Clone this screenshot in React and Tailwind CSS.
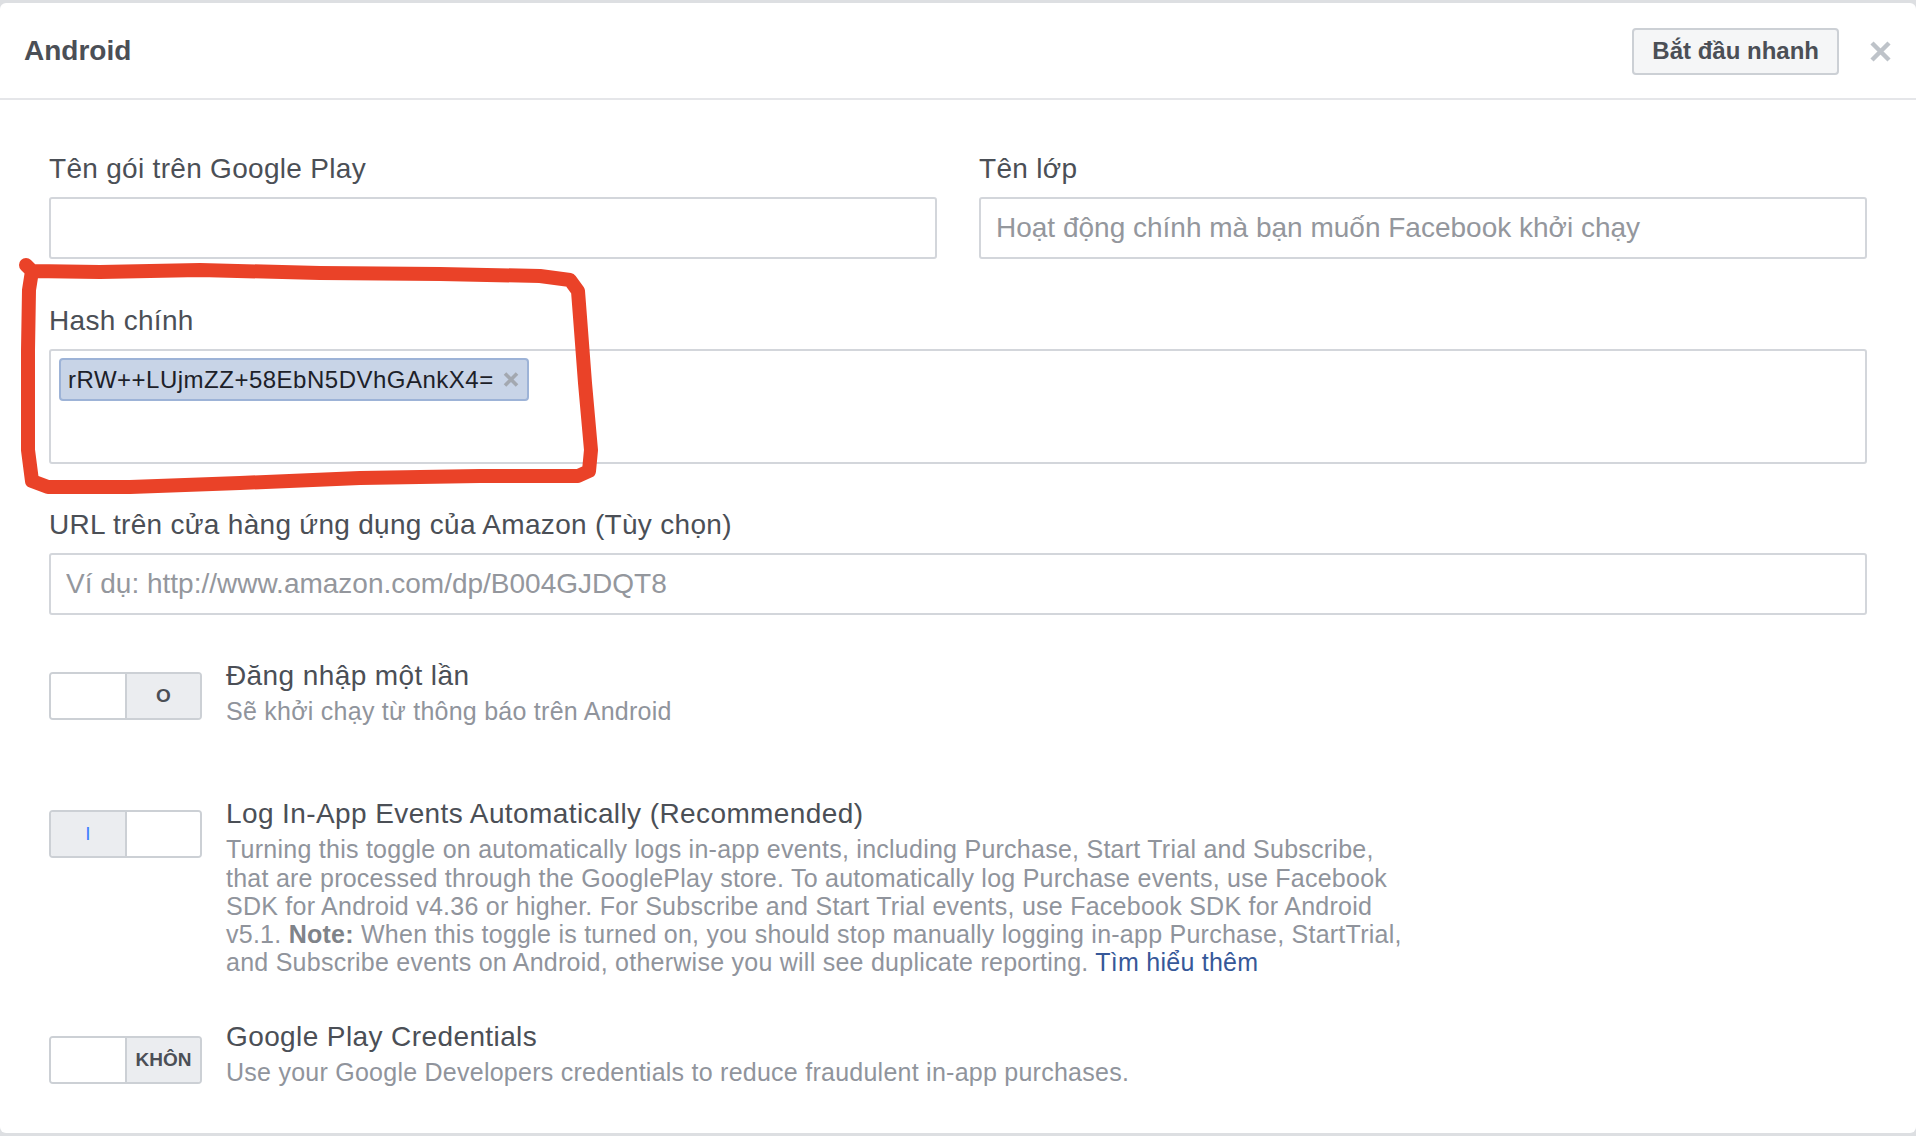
import React from "react";

function Label({ children }) {
  return (
    <div className="text-[28px] leading-[34px] tracking-[0.3px] text-[#4b4f56] mb-[11px] whitespace-nowrap">{children}</div>
  );
}

function TextInput({ placeholder }) {
  return (
    <input
      readOnly
      placeholder={placeholder}
      className="w-full h-[62px] border-2 border-[#d3d6db] rounded-[3px] bg-white px-[15px] text-[28px] text-[#1d2129] placeholder:text-[#94979d] outline-none"
    />
  );
}

function Toggle({ on, offLabel, offset }) {
  const mt = offset === "low" ? "mt-[16px]" : "mt-[13px]";
  if (on) {
    return (
      <div className={mt + " w-[153px] h-[48px] shrink-0 border-2 border-[#ccd0d5] rounded-[4px] flex overflow-hidden"}>
        <div className="w-[76px] h-full bg-[#ebedf0] border-r-2 border-[#ccd0d5] flex items-center justify-center text-[19px] text-[#4080ff]">I</div>
        <div className="flex-1 bg-white"></div>
      </div>
    );
  }
  return (
    <div className={mt + " w-[153px] h-[48px] shrink-0 border-2 border-[#ccd0d5] rounded-[4px] flex overflow-hidden"}>
      <div className="w-[76px] h-full bg-white border-r-2 border-[#ccd0d5]"></div>
      <div className="flex-1 bg-[#ebedf0] flex items-center justify-center text-[19px] font-bold text-[#4b4f56] overflow-hidden whitespace-nowrap">{offLabel}</div>
    </div>
  );
}

function ToggleRow({ on, offLabel, title, children, className, offset }) {
  return (
    <div className={"flex items-start " + (className || "")}>
      <Toggle on={on} offLabel={offLabel} offset={offset} />
      <div className="ml-[24px]">
        <div className="text-[28px] leading-[34px] tracking-[0.4px] text-[#4b4f56] whitespace-nowrap">{title}</div>
        <div className="mt-[4px] text-[25px] leading-[28.3px] tracking-[0.25px] text-[#90949c]">{children}</div>
      </div>
    </div>
  );
}

export default function App() {
  return (
    <div className="relative w-[1916px] h-[1136px] bg-[#dddfe2] pt-[3px] overflow-hidden font-['Liberation_Sans',Arial,sans-serif]">
      <div className="bg-white rounded-[6px] h-[1130px] flex flex-col">
        <header className="h-[97px] shrink-0 flex items-center justify-between border-b-2 border-[#e5e6e9] pl-[24px] pr-[25px] pt-[1px]">
          <h1 className="text-[28px] font-bold text-[#4b4f56]">Android</h1>
          <div className="flex items-center gap-[31px]">
            <button className="h-[47px] px-[18px] rounded-[4px] border-2 border-[#ccd0d5] bg-[#f5f6f7] text-[24px] font-bold text-[#4b4f56] whitespace-nowrap">
              Bắt đầu nhanh
            </button>
            <svg width="21" height="21" viewBox="0 0 21 21" className="block">
              <path d="M2 2 L19 19 M19 2 L2 19" stroke="#bec3c9" strokeWidth="4.5" />
            </svg>
          </div>
        </header>

        <main className="px-[49px] pt-[52px]">
          <div className="grid grid-cols-2 gap-x-[42px]">
            <div>
              <Label>Tên gói trên Google Play</Label>
              <TextInput placeholder="" />
            </div>
            <div>
              <Label>Tên lớp</Label>
              <TextInput placeholder="Hoạt động chính mà bạn muốn Facebook khởi chạy" />
            </div>
          </div>

          <div className="mt-[45px]">
            <Label>Hash chính</Label>
            <div className="h-[115px] border-2 border-[#d3d6db] rounded-[3px] bg-white pt-[7px] pl-[8px]">
              <span className="inline-flex items-center h-[43px] pl-[7px] pr-[8px] bg-[#c8d4e7] border-2 border-[#9db3d7] rounded-[4px]">
                <span className="text-[24px] tracking-[0.5px] text-[#1d2129] whitespace-nowrap">rRW++LUjmZZ+58EbN5DVhGAnkX4=</span>
                <svg width="16" height="15" viewBox="0 0 16 15" className="ml-[9px]">
                  <path d="M2 1.5 L14 13.5 M14 1.5 L2 13.5" stroke="#a3a8b0" strokeWidth="3.6" />
                </svg>
              </span>
            </div>
          </div>

          <div className="mt-[44px]">
            <Label>URL trên cửa hàng ứng dụng của Amazon (Tùy chọn)</Label>
            <TextInput placeholder="Ví dụ: http://www.amazon.com/dp/B004GJDQT8" />
          </div>

          <ToggleRow className="mt-[44px]" offLabel="O" title="Đăng nhập một lần">
            Sẽ khởi chạy từ thông báo trên Android
          </ToggleRow>

          <ToggleRow className="mt-[72px]" on title="Log In-App Events Automatically (Recommended)">
            <div className="whitespace-nowrap">Turning this toggle on automatically logs in-app events, including Purchase, Start Trial and Subscribe,</div>
            <div className="whitespace-nowrap">that are processed through the GooglePlay store. To automatically log Purchase events, use Facebook</div>
            <div className="whitespace-nowrap">SDK for Android v4.36 or higher. For Subscribe and Start Trial events, use Facebook SDK for Android</div>
            <div className="whitespace-nowrap">v5.1. <span className="font-bold text-[#7f8389]">Note:</span> When this toggle is turned on, you should stop manually logging in-app Purchase, StartTrial,</div>
            <div className="whitespace-nowrap">and Subscribe events on Android, otherwise you will see duplicate reporting. <span className="text-[#365899]">Tìm hiểu thêm</span></div>
          </ToggleRow>

          <ToggleRow className="mt-[43px]" offset="low" offLabel="KHÔN" title="Google Play Credentials">
            Use your Google Developers credentials to reduce fraudulent in-app purchases.
          </ToggleRow>
        </main>
      </div>

      <svg className="absolute left-0 top-0 pointer-events-none" width="1916" height="1136" viewBox="0 0 1916 1136">
        <path
          d="M26 265 L32 271 L100 272 L200 270 L320 273 L440 274 L540 276 L570 280 L578 291 L580 317 L585 383 L591 450 L589 471 L578 476 L480 476 L360 478 L240 483 L130 487 L48 487 L32 481 L28 450 L28 350 L29 290 L32 271"
          fill="none"
          stroke="#ea4228"
          strokeWidth="14"
          strokeLinejoin="round"
          strokeLinecap="round"
        />
      </svg>
    </div>
  );
}
